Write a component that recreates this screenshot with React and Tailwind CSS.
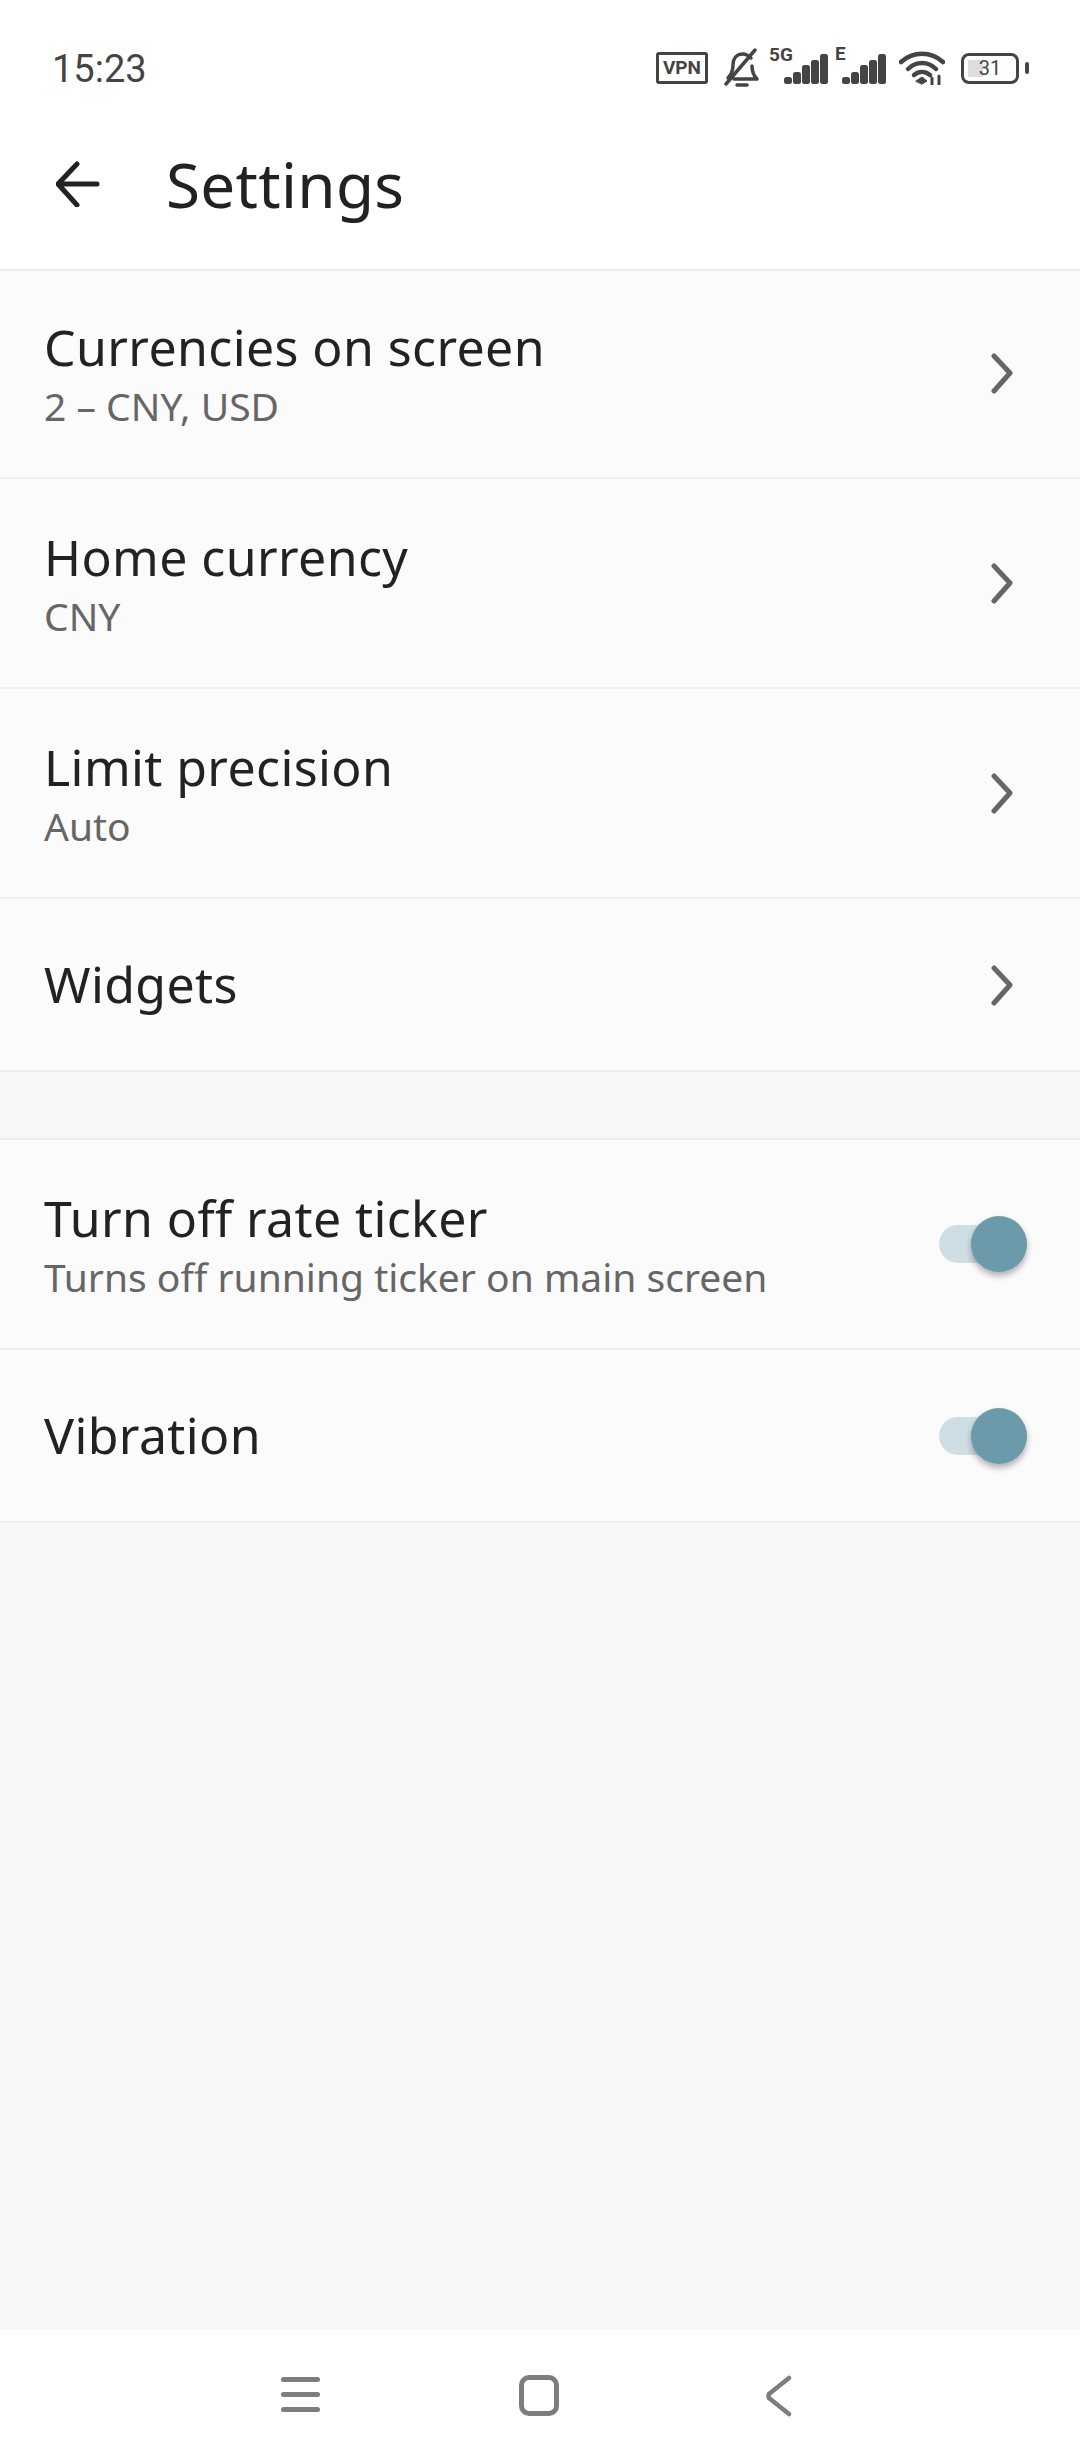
import React from 'react';

const rows = [
  { title: 'Currencies on screen', sub: '2 – CNY, USD' },
  { title: 'Home currency', sub: 'CNY' },
  { title: 'Limit precision', sub: 'Auto' },
  { title: 'Widgets' },
];

const toggles = [
  { title: 'Turn off rate ticker', sub: 'Turns off running ticker on main screen' },
  { title: 'Vibration' },
];

function Chevron() {
  return (
    <svg width="24" height="42" viewBox="0 0 24 42" className="shrink-0" fill="none" stroke="#666666" strokeWidth="5" strokeLinecap="round" strokeLinejoin="round">
      <path d="M4 4 L20 21 L4 39" />
    </svg>
  );
}

function Toggle() {
  return (
    <div className="relative w-[88px] h-[38px] shrink-0">
      <div className="w-[72px] h-[38px] rounded-full bg-[#cfdee4]" />
      <div className="absolute right-0 top-[-9px] w-[56px] h-[56px] rounded-full bg-[#6b9aab] shadow-[0_4px_6px_rgba(0,0,0,0.3)]" />
    </div>
  );
}

function Row({ title, sub, children }) {
  return (
    <div className={`flex items-center justify-between pl-[44px] border-b-2 border-[#efefef] bg-[#fbfbfb] ${sub ? 'h-[210px]' : 'h-[173px]'}`}>
      <div className={`flex flex-col ${sub ? 'pt-[4px]' : 'mb-[1px]'}`}>
        <div className="text-[50px] leading-[60px] tracking-[0.4px] text-[#222222]">{title}</div>
        {sub && <div className="text-[39px] leading-[57px] text-[#666666]">{sub}</div>}
      </div>
      {children}
    </div>
  );
}

function Bars() {
  return (
    <svg width="44" height="30" viewBox="0 0 44 30" fill="#444444">
      <rect x="0" y="23" width="8" height="7" rx="2.5" />
      <rect x="9" y="18" width="8" height="12" rx="2.5" />
      <rect x="18" y="11" width="8" height="19" rx="2.5" />
      <rect x="27" y="6" width="8" height="24" rx="2.5" />
      <rect x="36" y="0" width="8" height="30" rx="2.5" />
    </svg>
  );
}

function StatusIcons() {
  return (
    <div className="flex items-center text-[#444444]">
      <div className="flex items-center justify-center w-[52px] h-[32px] border-[3px] border-[#444444] rounded-[3px] text-[19px] font-bold font-['Roboto',sans-serif]">VPN</div>
      <svg className="ml-[16px]" width="36" height="40" viewBox="0 0 36 40" fill="none" stroke="#444444" strokeWidth="3.5" strokeLinecap="round" strokeLinejoin="round">
        <path d="M4 30 C8 26 9 22 9 17 C9 10 13 6 19 6 C22 6 25 8 27 10" />
        <path d="M28 18 C28 23 29 27 33 31 L10 31" />
        <path d="M2 36 L31 2" />
        <path d="M13 37 L23 37" />
      </svg>
      <div className="relative ml-[24px] pt-[2px]">
        <span className="absolute left-[-15px] top-[-6px] text-[19px] leading-[18px] font-bold font-['Roboto',sans-serif]">5G</span>
        <Bars />
      </div>
      <div className="relative ml-[14px] pt-[2px]">
        <span className="absolute left-[-7px] top-[-7px] text-[19px] leading-[18px] font-bold font-['Roboto',sans-serif]">E</span>
        <Bars />
      </div>
      <svg className="ml-[13px]" width="46" height="34" viewBox="0 0 46 34" fill="none" stroke="#444444" strokeWidth="4.5" strokeLinecap="round">
        <path d="M2 11 C14 0 32 0 44 11" />
        <path d="M9 18 C17 10 29 10 37 18" />
        <path d="M15 24 C20 20 26 20 31 24" />
        <path d="M17 30 L23 26 L28 30 L23 33 Z" fill="#444444" strokeWidth="1" />
        <path d="M33 27 L33 33 M40 25 L40 33" strokeWidth="3" />
      </svg>
      <div className="relative ml-[16px] flex items-center justify-center w-[58px] h-[31px] border-[3px] border-[#444444] rounded-[8px] overflow-hidden">
        <div className="absolute left-[4px] top-[4px] bottom-[4px] w-[15px] bg-[#dddddd]" />
        <span className="relative text-[20px] leading-none font-['Roboto',sans-serif] text-[#444444]">31</span>
      </div>
      <div className="ml-[6px] w-[4px] h-[12px] rounded-full bg-[#444444]" />
    </div>
  );
}

export default function App() {
  return (
    <div className="w-[1080px] h-[2460px] flex flex-col bg-[#f7f7f7] font-['Noto_Sans',sans-serif] [font-variant-ligatures:none]">
      {/* Header */}
      <header className="h-[269px] bg-white shadow-[0_1px_3px_rgba(0,0,0,0.12)] relative">
        <div className="flex items-center justify-between h-[136px] pl-[52px] pr-[51px]">
          <span className="pt-[2px] text-[38px] text-[#444444] font-['Roboto',sans-serif]">15:23</span>
          <StatusIcons />
        </div>
        <div className="flex items-center h-[96px] pl-[56px]">
          <svg width="44" height="46" viewBox="0 0 44 46" fill="none" stroke="#222222" strokeWidth="5" strokeLinecap="round" strokeLinejoin="round">
            <path d="M3 23 L41 23 M21 3 L2 23 L21 44" />
          </svg>
          <h1 className="ml-[66px] text-[62px] leading-none tracking-[0.3px] text-[#222222]">Settings</h1>
        </div>
      </header>

      {/* Rows */}
      <div>
        {rows.map(r => (
          <Row key={r.title} title={r.title} sub={r.sub}><div className="mr-[66px]"><Chevron /></div></Row>
        ))}
      </div>
      <div className="mt-[66px] border-t-2 border-[#efefef]">
        {toggles.map(r => (
          <Row key={r.title} title={r.title} sub={r.sub}><div className="mr-[53px]"><Toggle /></div></Row>
        ))}
      </div>

      {/* Nav bar */}
      <div className="mt-auto h-[130px] bg-white flex items-start pt-[45px]">
        <div className="ml-[281px] mt-[2px] flex flex-col gap-[10px] w-[39px]">
          <div className="h-[5px] rounded-full bg-[#7d7d7d]" />
          <div className="h-[5px] rounded-full bg-[#7d7d7d]" />
          <div className="h-[5px] rounded-full bg-[#7d7d7d]" />
        </div>
        <div className="ml-[199px] w-[40px] h-[41px] border-[5px] border-[#7d7d7d] rounded-[10px]" />
        <svg className="ml-[207px]" width="26" height="42" viewBox="0 0 26 42" fill="none" stroke="#7d7d7d" strokeWidth="4.5" strokeLinecap="round" strokeLinejoin="round">
          <path d="M23 3 L3 19 Q2 21 3 23 L23 39" />
        </svg>
      </div>
    </div>
  );
}
